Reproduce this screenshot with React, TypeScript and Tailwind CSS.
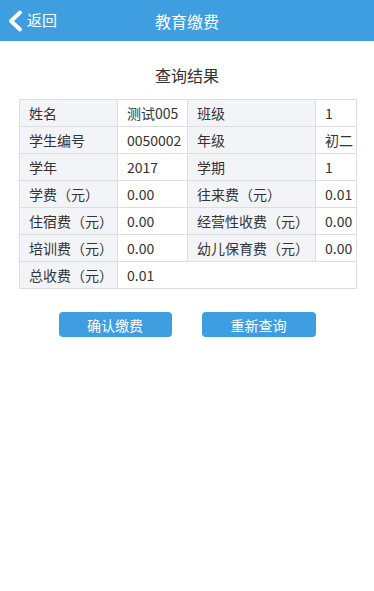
import React from "react";

const font = { fontFamily: '"Microsoft YaHei", "Noto Sans CJK SC", "Noto Sans", sans-serif' };

function Th({ children }: { children: React.ReactNode }) {
  return (
    <td className="border border-[#dadde2] bg-[#f3f4f8] px-[9px] h-[27px] whitespace-nowrap overflow-hidden text-[14px] text-[#333] leading-none">
      {children}
    </td>
  );
}
function Td({ children, colSpan }: { children: React.ReactNode; colSpan?: number }) {
  return (
    <td
      colSpan={colSpan}
      className="border border-[#dadde2] bg-white px-[9px] h-[27px] whitespace-nowrap overflow-hidden text-[14px] text-[#333] leading-none"
    >
      {children}
    </td>
  );
}

export default function App() {
  return (
    <div className="w-[374px] h-[591px] bg-white flex flex-col" style={font}>
      <div className="relative h-[41px] bg-[#3e9ee0] flex items-center justify-center shrink-0">
        <div className="absolute left-[6px] top-0 h-full flex items-center">
          <svg width="18" height="24" viewBox="0 0 18 24" className="mr-[3px]">
            <path d="M14 3.5 L5 12 L14 20.5" fill="none" stroke="white" strokeWidth="4" strokeLinecap="round" strokeLinejoin="round" />
          </svg>
          <span className="text-white text-[15px]">返回</span>
        </div>
        <span className="text-white text-[16px]">教育缴费</span>
      </div>

      <div className="flex justify-center mt-[23px] h-[22px] items-center">
        <span className="text-[16px] text-[#333]">查询结果</span>
      </div>

      <div className="px-[19px] mt-[13px]">
        <table className="table-fixed border-collapse w-[337px]">
          <colgroup>
            <col className="w-[98px]" />
            <col className="w-[70px]" />
            <col className="w-[128px]" />
            <col className="w-[41px]" />
          </colgroup>
          <tbody>
            <tr>
              <Th>姓名</Th>
              <Td>测试005</Td>
              <Th>班级</Th>
              <Td>1</Td>
            </tr>
            <tr>
              <Th>学生编号</Th>
              <Td>0050002</Td>
              <Th>年级</Th>
              <Td>初二</Td>
            </tr>
            <tr>
              <Th>学年</Th>
              <Td>2017</Td>
              <Th>学期</Th>
              <Td>1</Td>
            </tr>
            <tr>
              <Th>学费（元）</Th>
              <Td>0.00</Td>
              <Th>往来费（元）</Th>
              <Td>0.01</Td>
            </tr>
            <tr>
              <Th>住宿费（元）</Th>
              <Td>0.00</Td>
              <Th>经营性收费（元）</Th>
              <Td>0.00</Td>
            </tr>
            <tr>
              <Th>培训费（元）</Th>
              <Td>0.00</Td>
              <Th>幼儿保育费（元）</Th>
              <Td>0.00</Td>
            </tr>
            <tr>
              <Th>总收费（元）</Th>
              <Td colSpan={3}>0.01</Td>
            </tr>
          </tbody>
        </table>
      </div>

      <div className="flex justify-center gap-[30px] mt-[23px]">
        <button className="w-[113px] h-[25px] rounded-[4px] bg-[#3e9ee0] text-white text-[14px] leading-none">
          确认缴费
        </button>
        <button className="w-[114px] h-[25px] rounded-[4px] bg-[#3e9ee0] text-white text-[14px] leading-none">
          重新查询
        </button>
      </div>
    </div>
  );
}
